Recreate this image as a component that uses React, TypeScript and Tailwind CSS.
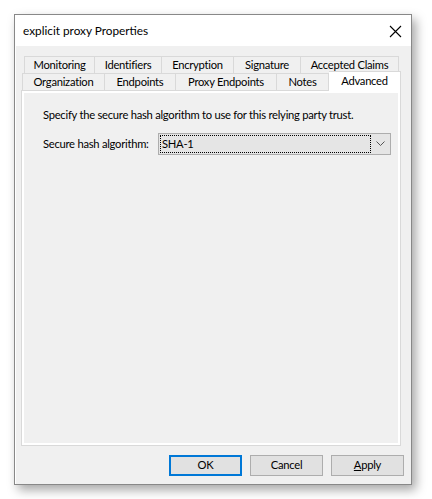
import React from 'react';

const row1 = [
  { label: 'Monitoring', w: 'w-[71px]' },
  { label: 'Identifiers', w: 'w-[67px]' },
  { label: 'Encryption', w: 'w-[72px]' },
  { label: 'Signature', w: 'w-[67px]' },
  { label: 'Accepted Claims', w: 'w-[98px]' },
];

const row2 = [
  { label: 'Organization', w: 'w-[83px]' },
  { label: 'Endpoints', w: 'w-[71px]' },
  { label: 'Proxy Endpoints', w: 'w-[101px]' },
  { label: 'Notes', w: 'w-[52px]' },
];

const Tab: React.FC<{ label: string; w: string; first?: boolean }> = ({ label, w, first }) => (
  <div
    className={`${w} h-full flex items-center justify-center border-t border-r border-[#d9d9d9] bg-[#f0f0f0] whitespace-nowrap ${
      first ? 'border-l' : ''
    }`}
  >
    {label}
  </div>
);

const App: React.FC = () => {
  return (
    <div
      className="w-[432px] h-[499px] bg-white pl-[14px] pt-[14px] text-[11.2px] tracking-[-0.25px] text-black"
      style={{ fontFamily: 'Lato, "Liberation Sans", sans-serif' }}
    >
      <div className="w-[398px] h-[471px] border border-[#888888] bg-[#f0f0f0] flex flex-col shadow-[4px_5px_10px_rgba(0,0,0,0.35)]">
        {/* title bar */}
        <div className="h-[31px] bg-white flex items-center justify-between pl-[8px] pr-[9px] shrink-0">
          <span className="text-[11.8px] tracking-normal">explicit proxy Properties</span>
          <svg width="13" height="13" viewBox="0 0 13 13" className="mt-[1px]">
            <path d="M1 1 L12 12 M12 1 L1 12" stroke="#000" strokeWidth="1.1" fill="none" />
          </svg>
        </div>

        {/* body */}
        <div className="flex-1 flex flex-col pl-[6px] pt-[9px] border-l border-white">
          <div className="h-[18px] flex ml-[2px] pt-[1px]">
            {row1.map((t, i) => (
              <Tab key={t.label} label={t.label} w={t.w} first={i === 0} />
            ))}
          </div>
          <div className="h-[17px] flex items-end relative z-10">
            {row2.map((t, i) => (
              <Tab key={t.label} label={t.label} w={t.w} first={i === 0} />
            ))}
            <div className="w-[72px] h-[20px] -mb-[1px] bg-white border-t border-r border-[#d9d9d9] flex items-start justify-center pt-[1px]">
              Advanced
            </div>
          </div>

          <div className="w-[380px] h-[356px] -ml-[1px] border border-[#d9d9d9] shadow-[inset_0_0_0_2px_#ffffff] bg-[#f0f0f0] pl-[21px] pt-[17px]">
            <div className="leading-[14px] whitespace-nowrap">
              Specify the secure hash algorithm to use for this relying party trust.
            </div>
            <div className="flex items-center mt-[11px]">
              <span className="w-[115px] whitespace-nowrap">Secure hash algorithm:</span>
              <div className="w-[233px] h-[22px] border border-[#adadad] bg-[#e5e5e5] flex items-center">
                <div className="ml-[1px] w-[211px] h-[18px] border border-dotted border-black flex items-center pl-[1px]">
                  SHA-1
                </div>
                <svg width="9" height="6" viewBox="0 0 9 6" className="ml-[5px]">
                  <path d="M0.5 0.5 L4.5 4.5 L8.5 0.5" stroke="#555" strokeWidth="1" fill="none" />
                </svg>
              </div>
            </div>
          </div>

          <div className="flex justify-end gap-[8px] pr-[7px] mt-[9px]">
            <button className="w-[73px] h-[21px] border-2 border-[#0078d7] bg-[#e1e1e1] flex items-center justify-center">
              OK
            </button>
            <button className="w-[73px] h-[21px] border border-[#adadad] bg-[#e1e1e1] flex items-center justify-center">
              Cancel
            </button>
            <button className="w-[73px] h-[21px] border border-[#adadad] bg-[#e1e1e1] flex items-center justify-center">
              <span>
                <span className="underline">A</span>pply
              </span>
            </button>
          </div>
        </div>
      </div>
    </div>
  );
};

export default App;
